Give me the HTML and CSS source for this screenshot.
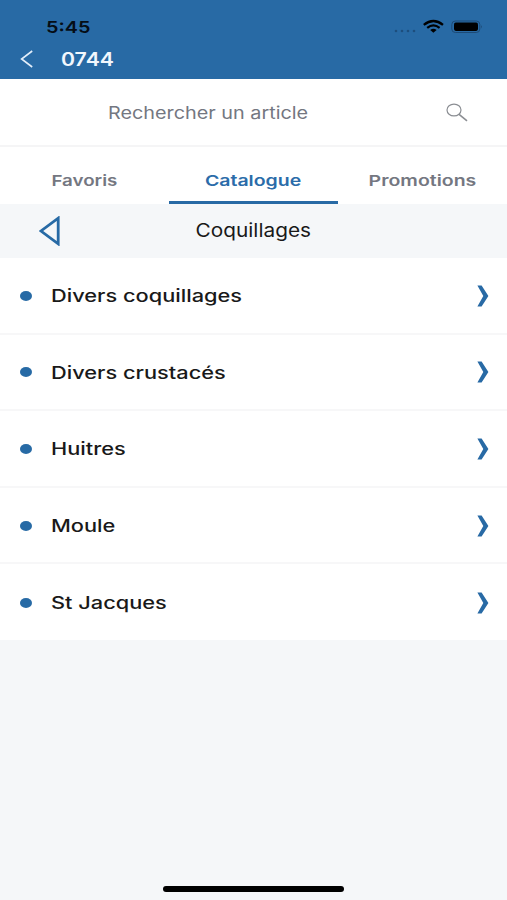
FILE: index.html
```html
<!DOCTYPE html>
<html lang="fr">
<head>
  <meta charset="UTF-8" />
  <meta name="viewport" content="width=device-width, initial-scale=1" />
  <title>Catalogue - Coquillages</title>
  <link rel="stylesheet" href="styles.css">
</head>
<body>
  <header>
    <div class="status-bar">
      <span class="time wide">5:45</span>
      <svg class="status-icons" width="90" height="16" viewBox="0 0 90 16">
        <g fill="#1d4e7d">
          <circle cx="3" cy="12" r="1.3" />
          <circle cx="9" cy="12" r="1.3" />
          <circle cx="15" cy="12" r="1.3" />
          <circle cx="21" cy="12" r="1.3" />
        </g>
        <g fill="none" stroke="#000" stroke-width="2.3">
          <path d="M30.8 5.8Q40.4 -1.8 50 5.8" />
          <path d="M34.2 8.8Q40.4 4 46.6 8.8" />
        </g>
        <path d="M37.2 11Q40.4 8.7 43.6 11L40.4 13.8Z" fill="#000" />
        <rect x="58.8" y="2" width="28" height="11.5" rx="3.5" fill="none" stroke="#1d4a76" />
        <rect x="61" y="3.6" width="24" height="8.3" rx="1.8" fill="#000" />
        <path d="M88 6v3.6q1.8-1.8 0-3.6z" fill="#1d4a76" />
      </svg>
    </div>
    <div class="nav-bar">
      <svg class="back" width="14" height="18" viewBox="0 0 14 18">
        <path d="M12.2 1L1.6 9L12.2 17" fill="none" stroke="#e3eefa" stroke-width="1.6" />
      </svg>
      <h1 class="wide">0744</h1>
    </div>
  </header>

  <div class="search">
    <span class="placeholder wide">Rechercher un article</span>
    <svg class="search-icon" width="22" height="19" viewBox="0 0 22 19">
      <ellipse cx="8" cy="7" rx="7" ry="5.9" fill="none" stroke="#8b8e93" stroke-width="1.2" />
      <path d="M12.8 11.2L21 17.8" stroke="#8b8e93" stroke-width="1.6" />
    </svg>
  </div>

  <nav class="tabs">
    <a class="tab"><span class="wide">Favoris</span></a>
    <a class="tab active"><span class="wide">Catalogue</span></a>
    <a class="tab"><span class="wide">Promotions</span></a>
  </nav>

  <div class="category">
    <svg class="category-back" width="22" height="30" viewBox="0 0 22 30">
      <path d="M19.2 2.2V27.8L2 15Z" fill="none" stroke="#276aa5" stroke-width="2.8" />
    </svg>
    <h2 class="wide">Coquillages</h2>
  </div>

  <ul class="list">
    <li>
      <span class="dot"></span>
      <span class="label wide">Divers coquillages</span>
      <svg class="arrow" width="12" height="22" viewBox="0 0 12 22"><path d="M0.4 0.6H4.6L11.4 11L4.6 21.4H0.4L6.3 11Z" /></svg>
    </li>
    <li>
      <span class="dot"></span>
      <span class="label wide">Divers crustacés</span>
      <svg class="arrow" width="12" height="22" viewBox="0 0 12 22"><path d="M0.4 0.6H4.6L11.4 11L4.6 21.4H0.4L6.3 11Z" /></svg>
    </li>
    <li>
      <span class="dot"></span>
      <span class="label wide">Huitres</span>
      <svg class="arrow" width="12" height="22" viewBox="0 0 12 22"><path d="M0.4 0.6H4.6L11.4 11L4.6 21.4H0.4L6.3 11Z" /></svg>
    </li>
    <li>
      <span class="dot"></span>
      <span class="label wide">Moule</span>
      <svg class="arrow" width="12" height="22" viewBox="0 0 12 22"><path d="M0.4 0.6H4.6L11.4 11L4.6 21.4H0.4L6.3 11Z" /></svg>
    </li>
    <li>
      <span class="dot"></span>
      <span class="label wide">St Jacques</span>
      <svg class="arrow" width="12" height="22" viewBox="0 0 12 22"><path d="M0.4 0.6H4.6L11.4 11L4.6 21.4H0.4L6.3 11Z" /></svg>
    </li>
  </ul>

  <div class="home-indicator"></div>
</body>
</html>
```
FILE: styles.css
```css
* {
  box-sizing: border-box;
  margin: 0;
  padding: 0;
}

body {
  display: flex;
  flex-direction: column;
  height: 900px;
  background: #f5f7f9;
  color: #191919;
  font-family: Inter, "Liberation Sans", sans-serif;
}

svg {
  display: block;
  flex: none;
}

/* stretched lettering */
.wide {
  display: inline-block;
  transform: scaleX(1.2);
  transform-origin: left center;
  white-space: nowrap;
}

header {
  height: 79px;
  background: #286aa5;
  padding-top: 17px;
}

.status-bar {
  display: flex;
  justify-content: space-between;
  align-items: center;
  height: 20px;
  padding: 0 24px 0 46px;
}

.time {
  color: #050d16;
  font-size: 16.5px;
  font-weight: 600;
}

.nav-bar {
  display: flex;
  align-items: center;
  height: 43px;
  padding-left: 20px;
}

.nav-bar h1 {
  margin-left: 27px;
  color: #f1f7fd;
  font-size: 18.5px;
  font-weight: 600;
  transform: scaleX(1.15);
}

.search {
  display: flex;
  justify-content: space-between;
  align-items: center;
  height: 68px;
  padding: 0 39px 0 108px;
  background: #fff;
  border-bottom: 2px solid #f5f5f6;
}

.placeholder {
  padding-top: 1px;
  color: #747781;
  font-size: 17px;
  transform: scaleX(1.165);
}

.tabs {
  display: grid;
  grid-template-columns: repeat(3, 1fr);
  height: 57px;
  background: #fff;
}

.tab {
  display: flex;
  justify-content: center;
  align-items: center;
  padding-top: 13px;
  border-bottom: 3px solid transparent;
  color: #747781;
  font-size: 15px;
  font-weight: 600;
}

.tab .wide {
  transform: scaleX(1.3);
  transform-origin: center;
}

.tab:first-child .wide {
  transform: scaleX(1.25);
}

.tab.active {
  color: #2b6ca9;
  border-bottom-color: #286aa5;
}

.category {
  display: grid;
  grid-template-columns: 60px 1fr 60px;
  align-items: center;
  height: 54px;
}

.category-back {
  margin-left: 39px;
}

.category h2 {
  justify-self: center;
  padding-bottom: 2px;
  font-size: 18.5px;
  font-weight: 400;
  transform: scaleX(1.125);
  transform-origin: center;
}

.list {
  list-style: none;
  background: #fff;
}

.list li {
  display: flex;
  align-items: center;
  height: 76.6px;
  padding: 1px 18px 0 19.5px;
  border-bottom: 2px solid #f7f7f8;
}

.list li:last-child {
  height: 75.6px;
  border-bottom: none;
}

.dot {
  width: 12px;
  height: 10px;
  border-radius: 50%;
  background: #276aa5;
}

.label {
  margin-left: 19.5px;
  padding-top: 1px;
  font-size: 17px;
  font-weight: 500;
  transform: scaleX(1.28);
}

.arrow {
  margin-left: auto;
  fill: #286aa5;
}

.home-indicator {
  width: 181px;
  height: 6px;
  margin: auto auto 8px;
  border-radius: 3px;
  background: #000;
}
```
